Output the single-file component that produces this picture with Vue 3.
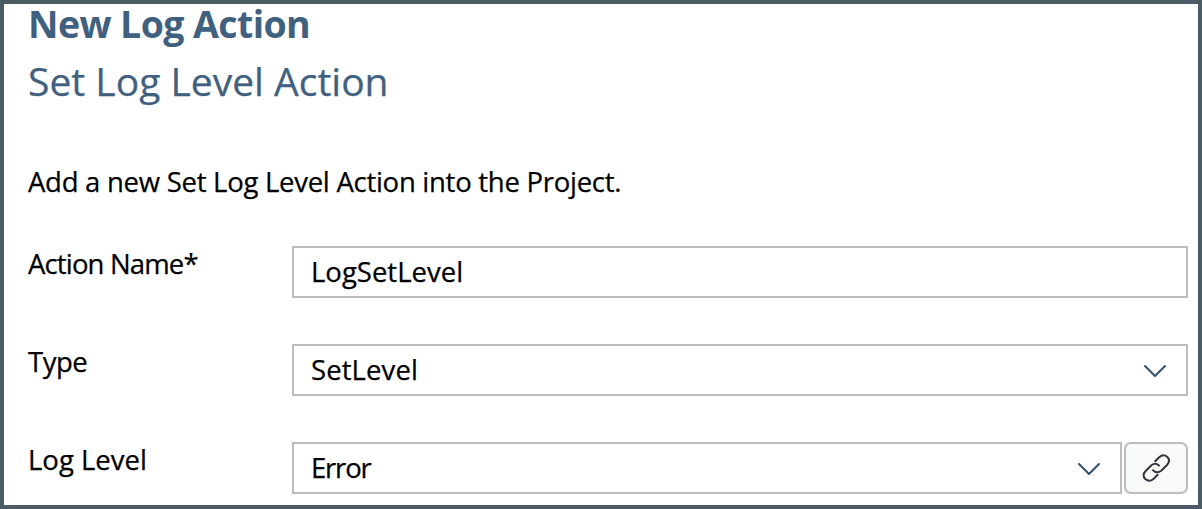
<script setup>
import { ref } from 'vue'

const name = ref('LogSetLevel')
const type = ref('SetLevel')
const level = ref('Error')
</script>

<template>
  <main class="dialog">
    <h1 class="title">New Log Action</h1>
    <h2 class="subtitle">Set Log Level Action</h2>
    <p class="intro">Add a new Set Log Level Action into the Project.</p>

    <div class="row name-row">
      <label class="label">Action Name*</label>
      <div class="field"><span class="value">{{ name }}</span></div>
    </div>

    <div class="row type-row">
      <label class="label">Type</label>
      <div class="field">
        <span class="value">{{ type }}</span>
        <svg class="chevron" viewBox="0 0 24 14"><path d="M2 2 L12 12 L22 2" /></svg>
      </div>
    </div>

    <div class="row level-row">
      <label class="label">Log Level</label>
      <div class="field">
        <span class="value">{{ level }}</span>
        <svg class="chevron" viewBox="0 0 24 14"><path d="M2 2 L12 12 L22 2" /></svg>
      </div>
      <button class="link" type="button" aria-label="Link">
        <svg class="link-icon" viewBox="0 0 30 30">
          <path d="M13.6 8.8 L18.2 4.2 Q22.4 .4 26.3 3.9 Q29.9 7.9 26 12 L20.2 17.8 Q15.6 21.3 11.3 16.6" />
          <path d="M17.2 21.2 L12.4 26 Q8.2 29.6 4.3 26.1 Q.7 22.1 4.6 18 L10.4 12.2 Q15 8.9 18.7 13.1" />
        </svg>
      </button>
    </div>
  </main>
</template>

<style scoped>
.dialog {
  box-sizing: border-box;
  height: 509px;
  padding: 0 10px 0 24px;
  border: 4px solid #4b5c66;
  background: #fff;
  color: #000;
  font: 27.5px/40px "Open Sans", "Noto Sans", sans-serif;
  -webkit-text-stroke: 0.25px currentColor;
}
.title, .subtitle, .intro { margin: 0; color: #3f617f; white-space: nowrap; }
.title { padding-top: 1px; font-size: 37.5px; font-weight: 700; line-height: 38px; letter-spacing: -0.6px; -webkit-text-stroke-width: 0; }
.subtitle { margin-top: 9px; font-size: 39px; font-weight: 400; line-height: 58px; }
.intro { margin: 52px 0 44px; color: #000; letter-spacing: -0.27px; }
.row { display: flex; height: 52px; margin-bottom: 46px; }
.level-row { margin-bottom: 0; }
.label { width: 264px; flex: none; margin-top: -2px; }
.name-row .label { letter-spacing: -0.85px; }
.type-row .label { letter-spacing: -0.5px; }
.field {
  box-sizing: border-box;
  flex: 1;
  display: flex;
  align-items: center;
  justify-content: space-between;
  padding: 0 19px 0 17px;
  border: 2px solid #bdbdbd;
}
.value { margin-top: -1px; }
.type-row .value { letter-spacing: 0.1px; }
.level-row .value { letter-spacing: -1.2px; }
.chevron { width: 24px; height: 14px; margin-top: 1px; fill: none; stroke: #32506b; stroke-width: 2; stroke-linecap: round; stroke-linejoin: round; }
.link {
  box-sizing: border-box;
  width: 64px;
  margin-left: 2px;
  padding: 0;
  display: flex;
  align-items: center;
  justify-content: center;
  border: 2px solid #bdbdbd;
  border-radius: 7px;
  background: #f8faf9;
}
.link-icon { width: 30px; height: 30px; fill: none; stroke: #32363a; stroke-width: 2; }
</style>

<style>
body { margin: 0; background: #fff; }
</style>
